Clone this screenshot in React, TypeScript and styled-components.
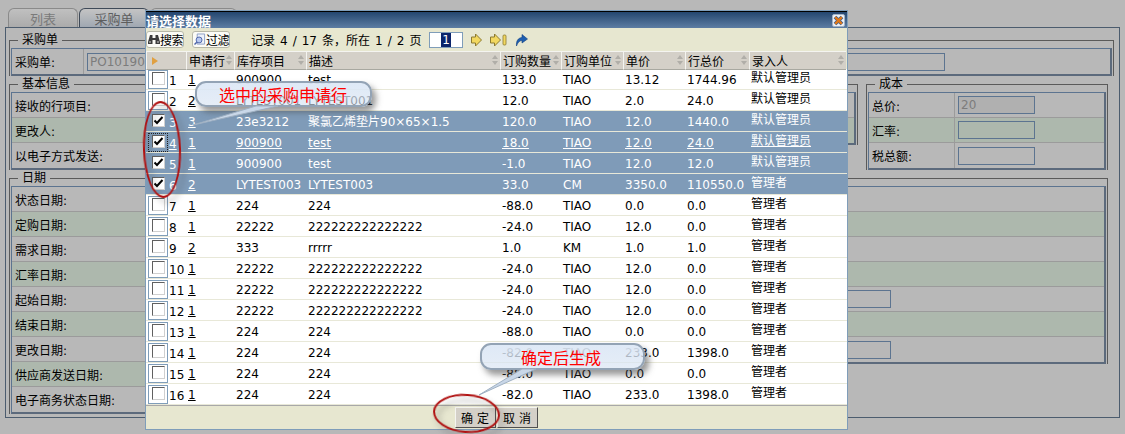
import React from 'react';
import styled, { createGlobalStyle } from 'styled-components';

type RowData = [string, string, string, string, string, string, string, string];

const LONG = '222222222222222';
const ADMIN = '默认管理员';
const MANAGER = '管理者';

const rows: RowData[] = [
    ['1', '900900', 'test', '133.0', 'TIAO', '13.12', '1744.96', ADMIN],
    ['2', 'LYTEST001', 'LYTEST001', '12.0', 'TIAO', '2.0', '24.0', ADMIN],
    ['3', '23e3212', '聚氯乙烯垫片90×65×1.5', '120.0', 'TIAO', '12.0', '1440.0', ADMIN],
    ['1', '900900', 'test', '18.0', 'TIAO', '12.0', '24.0', ADMIN],
    ['1', '900900', 'test', '-1.0', 'TIAO', '12.0', '12.0', ADMIN],
    ['2', 'LYTEST003', 'LYTEST003', '33.0', 'CM', '3350.0', '110550.0', MANAGER],
    ['1', '224', '224', '-88.0', 'TIAO', '0.0', '0.0', MANAGER],
    ['1', '22222', LONG, '-24.0', 'TIAO', '12.0', '0.0', MANAGER],
    ['2', '333', 'rrrrr', '1.0', 'KM', '1.0', '1.0', MANAGER],
    ['1', '22222', LONG, '-24.0', 'TIAO', '12.0', '0.0', MANAGER],
    ['1', '22222', LONG, '-24.0', 'TIAO', '12.0', '0.0', MANAGER],
    ['1', '22222', LONG, '-24.0', 'TIAO', '12.0', '0.0', MANAGER],
    ['1', '224', '224', '-88.0', 'TIAO', '0.0', '0.0', MANAGER],
    ['1', '224', '224', '-82.0', 'TIAO', '233.0', '1398.0', MANAGER],
    ['1', '224', '224', '-88.0', 'TIAO', '0.0', '0.0', MANAGER],
    ['1', '224', '224', '-82.0', 'TIAO', '233.0', '1398.0', MANAGER],
];

const headers = ['申请行', '库存项目', '描述', '订购数量', '订购单位', '单价', '行总价', '录入人'];
const dateLabels = ['状态日期:', '定购日期:', '需求日期:', '汇率日期:', '起始日期:', '结束日期:', '更改日期:', '供应商发送日期:', '电子商务状态日期:'];

function App() {
    return (
        <Page>
            <GlobalStyle />
            <TabBar>
                <Tab>列表</Tab>
                <Tab $active>采购单</Tab>
                <Tab $wide />
            </TabBar>
            <Panel>
                <FieldBox>
                    <Legend>采购单</Legend>
                    <FormTable>
                        <FormRow>
                            <FormLabel $width={69}>采购单:</FormLabel>
                            <TextField $width={858}>PO101901</TextField>
                        </FormRow>
                    </FormTable>
                </FieldBox>

                <SectionRow>
                    <FieldBox $width={391}>
                        <Legend>基本信息</Legend>
                        <FormTable>
                            <FormRow>接收的行项目:</FormRow>
                            <FormRow $green>更改人:</FormRow>
                            <FormRow>以电子方式发送:</FormRow>
                        </FormTable>
                    </FieldBox>
                    <FieldBox $width={450}>
                        <Legend>&nbsp;</Legend>
                        <FormTable>
                            <FormRow />
                            <FormRow $green />
                        </FormTable>
                    </FieldBox>
                    <FieldBox $width={242}>
                        <Legend>成本</Legend>
                        <FormTable>
                            <FormRow>
                                <FormLabel $width={83}>总价:</FormLabel>
                                <TextField $width={77} $disabled>20</TextField>
                            </FormRow>
                            <FormRow $green>
                                <FormLabel $width={83}>汇率:</FormLabel>
                                <TextField $width={77} />
                            </FormRow>
                            <FormRow>
                                <FormLabel $width={83}>税总额:</FormLabel>
                                <TextField $width={77} />
                            </FormRow>
                        </FormTable>
                    </FieldBox>
                </SectionRow>

                <SectionRow>
                    <FieldBox $width={391}>
                        <Legend>日期</Legend>
                        <FormTable>
                            {dateLabels.map((label, i) => (
                                <FormRow key={label} $green={i % 2 === 1}>{label}</FormRow>
                            ))}
                        </FormTable>
                    </FieldBox>
                    <FieldBox $width={700}>
                        <Legend>&nbsp;</Legend>
                        <FormTable>
                            {[0, 1, 2, 3, 4, 5, 6].map((i) => (
                                <FormRow key={i} $green={i % 2 === 1}>
                                    {(i === 4 || i === 6) && (
                                        <>
                                            <FormLabel $width={283} />
                                            <TextField $width={191} />
                                        </>
                                    )}
                                </FormRow>
                            ))}
                        </FormTable>
                    </FieldBox>
                </SectionRow>
            </Panel>

            <Dialog>
                <TitleBar>
                    请选择数据
                    <CloseIcon />
                </TitleBar>
                <Toolbar>
                    <ToolButton $marginRight={8}><BinocularsIcon />搜索</ToolButton>
                    <ToolButton $marginRight={21}><FilterIcon />过滤</ToolButton>
                    <RecordInfo>记录 4 / 17 条，所在 1 / 2 页</RecordInfo>
                    <PageInput><Selected>1</Selected></PageInput>
                    <NextIcon />
                    <LastIcon />
                    <GoIcon />
                </Toolbar>
                <HeaderRow>
                    <HeaderCell $plain>
                        <MarkerArrow />
                    </HeaderCell>
                    {headers.map((h) => (
                        <HeaderCell key={h}>{h}</HeaderCell>
                    ))}
                </HeaderRow>
                <Rows>
                    {rows.map((row, i) => {
                        const selected = i >= 2 && i <= 5;
                        const hovered = i === 3;
                        return (
                            <Row key={i} $selected={selected} $hovered={hovered}>
                                <CheckCell>
                                    <CheckFrame $selected={selected} $focused={hovered}>
                                        <CheckBox>
                                            {selected && <TickIcon />}
                                        </CheckBox>
                                    </CheckFrame>
                                    <RowNumber>{i + 1}</RowNumber>
                                </CheckCell>
                                {row.map((value, c) => (
                                    <Cell key={c} $link={c === 0}>{value}</Cell>
                                ))}
                            </Row>
                        );
                    })}
                </Rows>
                <Footer>
                    <ActionButton>确 定</ActionButton>
                    <ActionButton>取 消</ActionButton>
                </Footer>
            </Dialog>

            <Note $left={195} $top={81} $width={177} $height={26} $indent={22}>选中的采购申请行</Note>
            <NoteTail $left={190} $top={103} width="100" height="26" viewBox="0 0 100 26">
                <polygon points="3,22 66,3 88,3" fill="#c9d7e8" stroke="#9fb0c2" strokeWidth="1" />
            </NoteTail>
            <Note $left={480} $top={343} $width={165} $height={27} $indent={39}>确定后生成</Note>
            <NoteTail $left={476} $top={366} width="70" height="32" viewBox="0 0 70 32">
                <polygon points="3,29 46,3 60,3" fill="#c9d7e8" stroke="#9fb0c2" strokeWidth="1" />
            </NoteTail>
            <Ring $left={143} $top={101} $width={38} $height={97} $tilt={-2} />
            <Ring $left={433} $top={394} $width={67} $height={39} $tilt={4} />
        </Page>
    );
}

function BinocularsIcon() {
    return (
        <svg width="12" height="11" viewBox="0 0 12 11">
            <path d="M2 1h2.500v3h3V1H10l2 7v2H7.500V6h-3v4H0V8z" fill="#3c3c3c" />
            <rect x="1" y="7" width="2" height="2" fill="#8a8a8a" />
            <rect x="9" y="7" width="2" height="2" fill="#8a8a8a" />
        </svg>
    );
}

function FilterIcon() {
    return (
        <svg width="13" height="13" viewBox="0 0 13 13">
            <path d="M3.500 .5h8v11h-8z" fill="#eef2fa" stroke="#8b9dc4" />
            <circle cx="5.500" cy="7" r="3.200" fill="#b9c9ee" stroke="#4a62a8" />
            <path d="M3 9.500 .5 12" stroke="#4a62a8" strokeWidth="1.600" />
        </svg>
    );
}

function CloseIcon() {
    return (
        <CloseBox width="13" height="13" viewBox="0 0 13 13">
            <rect x=".5" y=".5" width="12" height="12" rx="1.500" fill="#eef0f4" stroke="#9fb2c8" />
            <path d="M3 3l7 7M10 3l-7 7" stroke="#2d5c96" strokeWidth="3.800" />
            <path d="M3.200 3.200l6.600 6.600M9.800 3.200l-6.600 6.600" stroke="#e0781a" strokeWidth="2.400" />
        </CloseBox>
    );
}

function NextIcon() {
    return (
        <NavIcon width="13" height="14" viewBox="0 0 13 14">
            <path d="M1.500 4h4V1l6 6-6 6v-3h-4z" fill="#f2d860" stroke="#8c7a30" />
        </NavIcon>
    );
}

function LastIcon() {
    return (
        <NavIcon width="20" height="14" viewBox="0 0 20 14">
            <path d="M1.500 4h4V1l6 6-6 6v-3h-4z" fill="#f2d860" stroke="#8c7a30" />
            <rect x="14" y="2" width="3" height="10" rx="1" fill="#f2d860" stroke="#8c7a30" strokeWidth=".8" />
        </NavIcon>
    );
}

function GoIcon() {
    return (
        <NavIcon width="13" height="14" viewBox="0 0 13 14">
            <path d="M1.500 13C1 8 3 5 7 4.500V1.500L12.500 6 7 10V7.500C5 7.500 3 9 1.500 13z" fill="#1f5fb0" stroke="#123f80" strokeWidth=".6" />
        </NavIcon>
    );
}

function TickIcon() {
    return (
        <svg width="11" height="11" viewBox="0 0 11 11">
            <path d="M1.500 5.500 4 8l5.500-6" fill="none" stroke="#000" strokeWidth="2" />
        </svg>
    );
}

const GlobalStyle = createGlobalStyle`
    html, body {
        margin: 0;
        padding: 0;
        height: 100%;
        background: #b8b8b8;
        overflow: hidden;
    }
`;

const Page = styled.div`
    position: relative;
    width: 1125px;
    height: 434px;
    padding-top: 8px;
    box-sizing: border-box;
    overflow: hidden;

    font-family: "DejaVu Sans", "Noto Sans CJK SC", sans-serif;
    font-size: 12px;
    color: #000;
    background: #b8b8b8;
`;

const TabBar = styled.div`
    display: flex;
    gap: 1px;
    height: 19px;
    margin-left: 8px;
`;

const Tab = styled.div<{ $active?: boolean; $wide?: boolean }>`
    display: flex;
    justify-content: center;
    align-items: center;
    box-sizing: border-box;

    width: ${(p) => (p.$wide ? '87px' : '70px')};
    border: 1px solid ${(p) => (p.$active ? '#3f4a58' : '#8a8a8a')};
    border-bottom: none;
    border-radius: 6px 6px 0 0;

    font-size: 13px;
    color: ${(p) => (p.$active ? '#5e5e5e' : '#7a7a7a')};
    background: ${(p) => (p.$active
        ? 'linear-gradient(#c4c4c4, #a0a8b2)'
        : 'linear-gradient(#c0c0c0, #ababab)')};
`;

const Panel = styled.div`
    box-sizing: border-box;
    width: 1115px;
    height: 391px;
    margin-left: 5px;
    padding: 5px 4px 0 3px;
    border: 1px solid #4c5c6e;
`;

const SectionRow = styled.div`
    display: flex;
    align-items: flex-start;
    gap: 8px;
    margin-top: 1px;
`;

const FieldBox = styled.fieldset<{ $width?: number }>`
    box-sizing: border-box;
    width: ${(p) => (p.$width ? `${p.$width}px` : '1105px')};
    min-inline-size: 0;
    margin: 0;
    padding: 1px 1px 0;
    border: 1px solid #5a5a5a;
    border-bottom: none;
`;

const Legend = styled.legend`
    height: 14px;
    margin-left: 7px;
    padding: 0 4px;
    font-size: 12px;
    line-height: 14px;
`;

const FormTable = styled.div`
    border: 1px solid #5c7490;
    border-right-width: 2px;
    border-bottom-width: 2px;
    border-right-color: #5c6a7c;
    border-bottom-color: #5c6a7c;
`;

const FormRow = styled.div<{ $green?: boolean }>`
    display: flex;
    align-items: center;
    box-sizing: border-box;
    height: 25px;
    padding-left: 3px;
    border-bottom: 1px solid #9b9b9b;
    background: ${(p) => (p.$green ? '#adb8ad' : '#b8b8b8')};

    &:last-child {
        border-bottom: none;
    }
`;

const FormLabel = styled.div<{ $width: number }>`
    display: flex;
    align-items: center;
    box-sizing: border-box;
    width: ${(p) => p.$width}px;
    height: 100%;
    margin-right: 3px;
    border-right: 1px solid #9b9b9b;
`;

const TextField = styled.div<{ $width: number; $disabled?: boolean }>`
    box-sizing: border-box;
    width: ${(p) => p.$width}px;
    height: 18px;
    padding-left: 2px;
    border: 1px solid #5c7490;
    line-height: 17px;
    color: #7c7c7c;
    background: ${(p) => (p.$disabled ? '#b0b0b0' : 'transparent')};
`;

const Dialog = styled.div`
    position: absolute;
    left: 145px;
    top: 10px;
    z-index: 1;

    display: flex;
    flex-direction: column;
    box-sizing: border-box;
    width: 703px;
    height: 420px;
    border: 1px solid #7f9db9;
    background: #e7e7d0;
`;

const TitleBar = styled.div`
    display: flex;
    justify-content: space-between;
    align-items: center;
    box-sizing: border-box;
    height: 17px;
    padding-right: 2px;
    border-top: 1px solid #000;

    font-size: 13px;
    font-weight: bold;
    color: #fff;
    background: linear-gradient(#24466f, #5d7da3);
`;

const CloseBox = styled.svg`
    flex: none;
    margin-top: 1px;
`;

const Toolbar = styled.div`
    display: flex;
    align-items: center;
    flex: none;
    height: 23px;
`;

const ToolButton = styled.div<{ $marginRight: number }>`
    display: flex;
    align-items: center;
    box-sizing: border-box;
    width: 38px;
    height: 17px;
    margin-right: ${(p) => p.$marginRight}px;
    padding-left: 1px;
    border: 1px solid #b8b8a8;
    border-radius: 3px;
    background: #fbfbf6;
    white-space: nowrap;
    letter-spacing: -.5px;
`;

const RecordInfo = styled.div`
    width: 178px;
    white-space: nowrap;
    word-spacing: 1.2px;
`;

const PageInput = styled.div`
    display: flex;
    justify-content: center;
    align-items: center;
    box-sizing: border-box;
    width: 34px;
    height: 16px;
    margin-right: 7px;
    border: 1px solid #7f9db9;
    background: #fff;
`;

const Selected = styled.span`
    padding: 0 1px;
    font-size: 12px;
    line-height: 14px;
    color: #fff;
    background: #0a246a;
`;

const NavIcon = styled.svg`
    flex: none;
    margin-right: 6px;
`;

const COLUMNS = '40px 48px 72px 194px 61px 62px 62px 64px 97px';

const HeaderRow = styled.div`
    display: grid;
    grid-template-columns: ${COLUMNS};
    flex: none;
    height: 18px;
`;

const HeaderCell = styled.div<{ $plain?: boolean }>`
    position: relative;
    display: flex;
    align-items: center;
    box-sizing: border-box;
    padding-left: 2px;
    border-top: 1px solid #f4f4f0;
    border-left: 1px solid #f4f4f0;
    border-bottom: 1px solid #a8a8a0;
    background: #d4d0c8;
    white-space: nowrap;

    &::before,
    &::after {
        content: ${(p) => (p.$plain ? 'none' : "''")};
        position: absolute;
        right: 2px;
        border-left: 3.5px solid transparent;
        border-right: 3.5px solid transparent;
    }

    &::before {
        top: 3px;
        border-bottom: 4px solid #b0aea8;
    }

    &::after {
        top: 9px;
        border-top: 4px solid #b0aea8;
    }
`;

const MarkerArrow = styled.span`
    margin-left: 3px;
    border-top: 4px solid transparent;
    border-bottom: 4px solid transparent;
    border-left: 6px solid #e0a040;
`;

const Rows = styled.div`
    flex: none;
`;

const Row = styled.div<{ $selected?: boolean; $hovered?: boolean }>`
    display: grid;
    grid-template-columns: ${COLUMNS};
    box-sizing: border-box;
    height: 21px;
    line-height: 18px;
    border-bottom: 1px solid #e8e8d8;
    white-space: nowrap;

    color: ${(p) => (p.$selected ? '#fff' : '#000')};
    background: ${(p) => (p.$selected ? '#7f9bb8' : '#fff')};
    text-decoration: ${(p) => (p.$hovered ? 'underline' : 'none')};
`;

const CheckCell = styled.div`
    display: flex;
    align-items: center;
    padding-left: 2px;
`;

const CheckFrame = styled.div<{ $selected?: boolean; $focused?: boolean }>`
    display: flex;
    justify-content: center;
    align-items: flex-start;
    box-sizing: border-box;
    flex: none;
    width: 20px;
    height: 19px;
    margin-right: 1px;
    padding-top: 1px;
    border: 1px ${(p) => (p.$focused ? 'dotted' : 'solid')};
    border-color: ${(p) => (p.$focused ? '#222' : p.$selected ? 'transparent' : '#7f9db9')};
`;

const CheckBox = styled.div`
    display: flex;
    justify-content: center;
    align-items: center;
    box-sizing: border-box;
    width: 13px;
    height: 13px;
    border: 1px solid;
    border-color: #606060 #d0d0d0 #d0d0d0 #606060;
    background: #fff;
`;

const RowNumber = styled.span`
    padding-top: 3px;
`;

const Cell = styled.div<{ $link?: boolean }>`
    padding: 2px 0 0 2px;
    overflow: hidden;
    text-decoration: ${(p) => (p.$link ? 'underline' : 'inherit')};

    &:last-child {
        padding-top: 0;
    }
`;

const Footer = styled.div`
    display: flex;
    justify-content: center;
    align-items: center;
    gap: 1px;
    flex: 1;
    padding-right: 1px;
    border-top: 1px solid #a8a8a8;
`;

const ActionButton = styled.div`
    display: flex;
    justify-content: center;
    align-items: center;
    box-sizing: border-box;
    width: 41px;
    height: 21px;
    border: 1px solid;
    border-color: #f4f4f0 #505050 #505050 #f4f4f0;
    background: #d4d0c8;
`;

const Note = styled.div<{ $left: number; $top: number; $width: number; $height: number; $indent: number }>`
    position: absolute;
    left: ${(p) => p.$left}px;
    top: ${(p) => p.$top}px;
    z-index: 2;

    display: flex;
    align-items: center;
    box-sizing: border-box;
    width: ${(p) => p.$width}px;
    height: ${(p) => p.$height}px;
    padding-left: ${(p) => p.$indent}px;
    border: 2px solid #93a3b5;
    border-radius: 11px;

    font-size: 16px;
    color: #f00;
    white-space: nowrap;
    background: linear-gradient(rgba(221, 232, 246, .96), rgba(214, 226, 242, .62));
    box-shadow: 4px 5px 6px rgba(70, 70, 70, .55);
`;

const NoteTail = styled.svg<{ $left: number; $top: number }>`
    position: absolute;
    left: ${(p) => p.$left}px;
    top: ${(p) => p.$top}px;
    z-index: 2;
`;

const Ring = styled.div<{ $left: number; $top: number; $width: number; $height: number; $tilt: number }>`
    position: absolute;
    left: ${(p) => p.$left}px;
    top: ${(p) => p.$top}px;
    z-index: 3;

    box-sizing: border-box;
    width: ${(p) => p.$width}px;
    height: ${(p) => p.$height}px;
    border: 2.5px solid #b01010;
    border-radius: 50%;
    transform: rotate(${(p) => p.$tilt}deg);
    filter: drop-shadow(4px 5px 3px rgba(60, 60, 60, .45));
`;

export default App;
